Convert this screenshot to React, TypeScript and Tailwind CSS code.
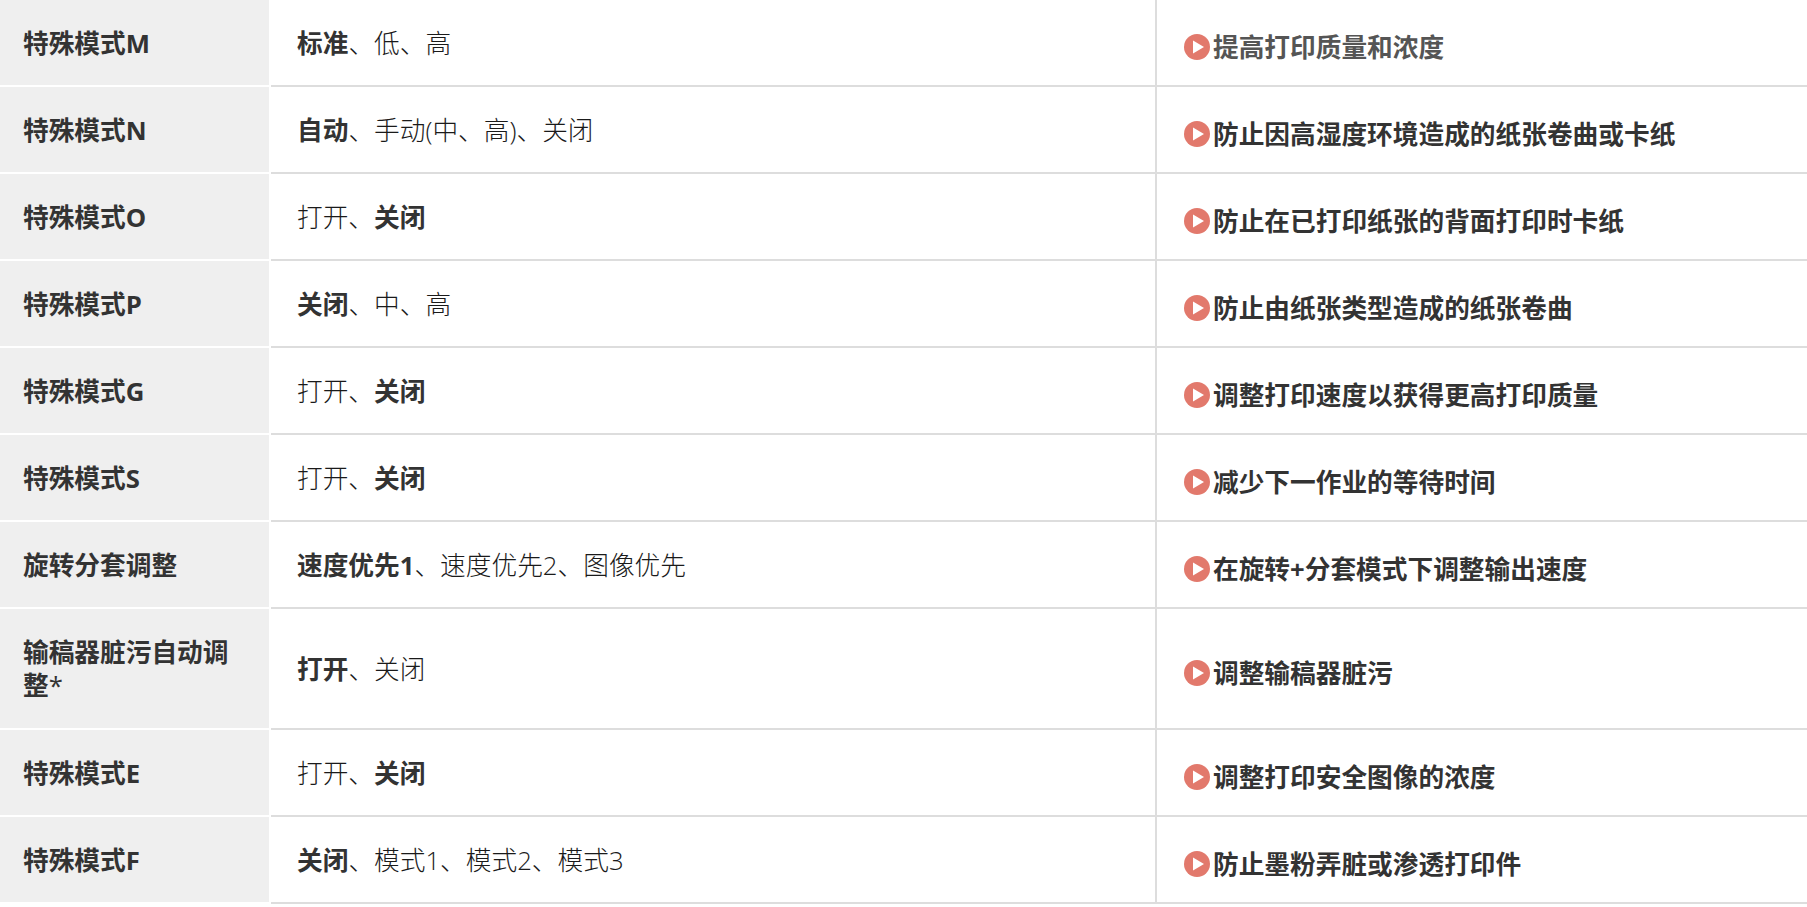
const font = "font-['Open_Sans','Noto_Sans_CJK_SC',sans-serif]";

interface Row {
  name: string;
  note?: string;
  options: [string, boolean][];
  desc: string;
  tall?: boolean;
  muted?: boolean;
}

const on = (s: string): [string, boolean] => [s, true];
const off = (s: string): [string, boolean] => [s, false];

const rows: Row[] = [
  { name: "特殊模式M", options: [on("标准"), off("、低、高")], desc: "提高打印质量和浓度", muted: true },
  { name: "特殊模式N", options: [on("自动"), off("、手动(中、高)、关闭")], desc: "防止因高湿度环境造成的纸张卷曲或卡纸" },
  { name: "特殊模式O", options: [off("打开、"), on("关闭")], desc: "防止在已打印纸张的背面打印时卡纸" },
  { name: "特殊模式P", options: [on("关闭"), off("、中、高")], desc: "防止由纸张类型造成的纸张卷曲" },
  { name: "特殊模式G", options: [off("打开、"), on("关闭")], desc: "调整打印速度以获得更高打印质量" },
  { name: "特殊模式S", options: [off("打开、"), on("关闭")], desc: "减少下一作业的等待时间" },
  { name: "旋转分套调整", options: [on("速度优先1"), off("、速度优先2、图像优先")], desc: "在旋转+分套模式下调整输出速度" },
  { name: "输稿器脏污自动调整", note: "*", options: [on("打开"), off("、关闭")], desc: "调整输稿器脏污", tall: true },
  { name: "特殊模式E", options: [off("打开、"), on("关闭")], desc: "调整打印安全图像的浓度" },
  { name: "特殊模式F", options: [on("关闭"), off("、模式1、模式2、模式3")], desc: "防止墨粉弄脏或渗透打印件" },
];

function PlayIcon() {
  return (
    <svg width="26" height="26" viewBox="0 0 26 26" className="shrink-0">
      <circle cx="13" cy="13" r="13" fill="#e2796c" />
      <path d="M9 6.5 L20 13 L9 19.5 Z" fill="#fff" />
    </svg>
  );
}

export default function App() {
  return (
    <div className={`${font} w-[1807px] bg-white text-[#333] text-[25.7px] leading-[33px]`}>
      {rows.map((row) => (
        <div key={row.name} className={`flex ${row.tall ? "h-[121px]" : "h-[87px]"}`}>
          <div className="w-[269px] shrink-0 flex items-center pl-[23px] pr-[23px] pt-[1px] bg-[#efefef] border-b-2 border-white font-bold">
            <span>
              {row.name}
              {row.note && <span className="font-normal">{row.note}</span>}
            </span>
          </div>
          <div className="w-[884px] ml-[2px] shrink-0 flex items-center pl-[26px] pt-[2px] border-b-2 border-[#ddd]">
            <span>
              {row.options.map(([text, bold]) => (
                <span key={text} className={bold ? "font-bold" : "font-light text-[#1a1a1a]"}>
                  {text}
                </span>
              ))}
            </span>
          </div>
          <div className="flex-1 flex items-center gap-[3px] pl-[27px] pt-[9px] border-l-2 border-b-2 border-[#ddd] font-bold">
            <PlayIcon />
            <span className={row.muted ? "text-[#555]" : "text-[#333]"}>{row.desc}</span>
          </div>
        </div>
      ))}
    </div>
  );
}
